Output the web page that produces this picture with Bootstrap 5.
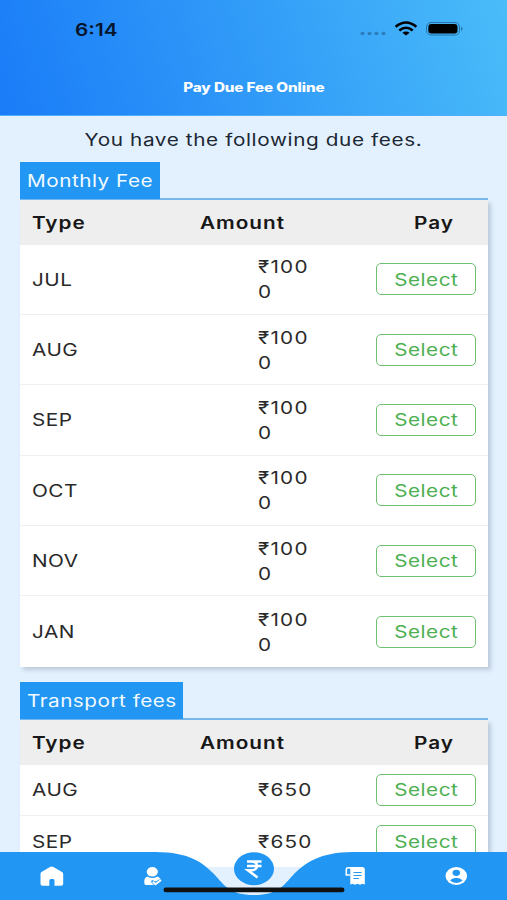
<!DOCTYPE html>
<html lang="en">
<head>
<meta charset="utf-8">
<meta name="viewport" content="width=device-width, initial-scale=1">
<title>Pay Due Fee Online</title>
<link href="https://cdn.jsdelivr.net/npm/bootstrap@5.3.0/dist/css/bootstrap.min.css" rel="stylesheet">
<style>
body{font-family:Inter,"Liberation Sans",sans-serif;font-size:17px;line-height:25px;color:#2a2a2a;background:#e3f1fe;height:900px;overflow:hidden}
.wide{display:inline-block;transform:translateY(1px) scaleX(1.22);transform-origin:left center;white-space:nowrap;letter-spacing:.4px}
.wide.mid{transform-origin:center}
.topbar{height:115.5px;background:linear-gradient(73deg,#1a7cf8 0%,#319bf8 50%,#4abcf9 100%);border-bottom:1px solid #52aefb}
.status{height:58px;padding:0 44px 0 75px}
.clock{font-size:17px;font-weight:600;color:#06152b;letter-spacing:0}
.bar-title{font-size:12.5px;font-weight:800;color:#fff;letter-spacing:-.1px}
.intro{height:46px;padding-top:2px;color:#1c2733}
.intro .wide{letter-spacing:.5px}
.fees{margin:0 19px 15px 20px}
.tab-line{height:38px;border-bottom:2px solid #76b8ee}
.tab-label{height:37px;width:140px;background:#2196f3;color:#f2faff;padding-left:7px}
.short .tab-label{width:163px}
.fee-table{background:#fff;box-shadow:3px 3px 4px rgba(80,100,125,.27)}
.fee-row{height:70.4px;border-bottom:1px solid #f0f0f0;padding:0 12px}
.fee-row:last-child{border-bottom:0}
.short .fee-row{height:51px}
.fee-head{height:45px;background:#eee;padding:0 12px;font-weight:600;color:#171717}
.fee-head .wide{letter-spacing:.8px}
.c-type{width:168px}
.c-amount{width:213.5px}
.r-type{width:226px}
.r-amount{width:118px}
.r-amount .wide{width:49px;white-space:normal;word-break:break-all;letter-spacing:1px}
.btn-select{width:100px;height:32px;margin-left:auto;border:1.5px solid #6cc070;border-radius:5px;color:#4caf50;font-size:17px;line-height:1}
.tabbar{height:48px}
</style>
</head>
<body>
<header class="topbar">
  <div class="status d-flex align-items-center justify-content-between">
    <span class="wide clock">6:14</span>
    <svg width="104" height="20" viewBox="0 0 104 20">
      <g fill="#2b7dbb"><ellipse cx="3.500" cy="14.500" rx="2" ry="1.700"/><ellipse cx="10.500" cy="14.500" rx="2" ry="1.700"/><ellipse cx="17.500" cy="14.500" rx="2" ry="1.700"/><ellipse cx="24.500" cy="14.500" rx="2" ry="1.700"/></g>
      <g fill="none" stroke="#000" stroke-width="2.600"><path d="M36.600 7.800Q47 -.8 57.400 7.800"/><path d="M40.300 11.500Q47 6 53.700 11.500"/></g>
      <path d="M43.400 13.800Q47 11 50.600 13.800L47 16.600Z"/>
      <rect x="67.500" y="3.500" width="33" height="12.500" rx="4.500" fill="none" stroke="#2773a5" stroke-width="1"/>
      <rect x="69.300" y="5" width="29.200" height="9.500" rx="3"/>
      <path d="M102 7.500Q105 9.700 102 12Z" fill="#2773a5"/>
    </svg>
  </div>
  <div class="d-flex justify-content-center align-items-center h-50"><span class="wide mid bar-title">Pay Due Fee Online</span></div>
</header>
<main>
  <div class="intro d-flex justify-content-center align-items-center"><span class="wide mid">You have the following due fees.</span></div>
  <section class="fees">
    <div class="tab-line d-flex"><div class="tab-label d-flex align-items-center"><span class="wide">Monthly Fee</span></div></div>
    <div class="fee-table">
      <div class="fee-head d-flex align-items-center"><div class="c-type"><span class="wide">Type</span></div><div class="c-amount"><span class="wide">Amount</span></div><span class="wide">Pay</span></div>
      <div class="fee-row d-flex align-items-center"><div class="r-type"><span class="wide">JUL</span></div><div class="r-amount"><span class="wide">₹1000</span></div><button class="btn btn-select p-0"><span class="wide mid">Select</span></button></div>
      <div class="fee-row d-flex align-items-center"><div class="r-type"><span class="wide">AUG</span></div><div class="r-amount"><span class="wide">₹1000</span></div><button class="btn btn-select p-0"><span class="wide mid">Select</span></button></div>
      <div class="fee-row d-flex align-items-center"><div class="r-type"><span class="wide">SEP</span></div><div class="r-amount"><span class="wide">₹1000</span></div><button class="btn btn-select p-0"><span class="wide mid">Select</span></button></div>
      <div class="fee-row d-flex align-items-center"><div class="r-type"><span class="wide">OCT</span></div><div class="r-amount"><span class="wide">₹1000</span></div><button class="btn btn-select p-0"><span class="wide mid">Select</span></button></div>
      <div class="fee-row d-flex align-items-center"><div class="r-type"><span class="wide">NOV</span></div><div class="r-amount"><span class="wide">₹1000</span></div><button class="btn btn-select p-0"><span class="wide mid">Select</span></button></div>
      <div class="fee-row d-flex align-items-center"><div class="r-type"><span class="wide">JAN</span></div><div class="r-amount"><span class="wide">₹1000</span></div><button class="btn btn-select p-0"><span class="wide mid">Select</span></button></div>
    </div>
  </section>
  <section class="fees short">
    <div class="tab-line d-flex"><div class="tab-label d-flex align-items-center"><span class="wide">Transport fees</span></div></div>
    <div class="fee-table">
      <div class="fee-head d-flex align-items-center"><div class="c-type"><span class="wide">Type</span></div><div class="c-amount"><span class="wide">Amount</span></div><span class="wide">Pay</span></div>
      <div class="fee-row d-flex align-items-center"><div class="r-type"><span class="wide">AUG</span></div><div class="r-amount"><span class="wide">₹650</span></div><button class="btn btn-select p-0"><span class="wide mid">Select</span></button></div>
      <div class="fee-row d-flex align-items-center"><div class="r-type"><span class="wide">SEP</span></div><div class="r-amount"><span class="wide">₹650</span></div><button class="btn btn-select p-0"><span class="wide mid">Select</span></button></div>
    </div>
  </section>
</main>
<nav class="tabbar fixed-bottom">
  <svg class="d-block" width="507" height="48" viewBox="0 852 507 48">
    <path fill="#e3f1fe" d="M180 867H330V900H180Z"/>
    <path fill="#2196f3" d="M0 852H155C190 852 203 863 214 874C225 886 230 895 254 895S283 886 294 874C305 863 320 852 353 852H507V900H0Z"/>
    <ellipse cx="254" cy="868.700" rx="20" ry="16.500" fill="#2196f3"/>
    <g fill="none" stroke="#fff" stroke-width="2.600"><path d="M247 861.500H261.500M247 866H261.500M247 861.500H251C259 861.500 259 870.300 251 870.300H248L257.500 877.500"/></g>
    <path fill="#fff" d="M40.500 874Q40.500 872.700 41.500 872L50 867Q51.700 866.200 53.400 867L62 872Q63.200 872.700 63.200 874V884Q63.200 885.700 61 885.700H54.500V880.500Q54.500 879 53 879H51Q49.300 879 49.300 880.500V885.700H42.500Q40.500 885.700 40.500 884Z"/>
    <ellipse cx="152.300" cy="871.800" rx="5.600" ry="4.800" fill="#fff"/>
    <path fill="#fff" d="M147.500 876.500Q152 879.500 157.500 876.500Q160 877.500 160.500 879L155.500 881.500L152 880L151 882L154 885H146Q144.300 885 144.300 883V880.500Q144.500 877.500 147.500 876.500Z"/>
    <path d="M152.800 881.800L155.500 884.200L161 880" fill="none" stroke="#fff" stroke-width="2"/>
    <path fill="#fff" d="M349 867H362Q364.800 867 364.800 869.500V884.500L362.500 883.800L360 884.700L357.500 883.800L355 884.700L352.500 883.800L350.300 884.500V869.500Z"/>
    <path d="M350.500 867.800H348Q346.300 867.800 346.300 870V875H350" fill="none" stroke="#fff" stroke-width="1.600"/>
    <path d="M353.500 872.500H361.500M353.500 875.500H361.500M353.500 878.500H359" stroke="#2196f3" stroke-width="1.100"/>
    <ellipse cx="456.300" cy="876" rx="10.800" ry="9" fill="#fff"/>
    <ellipse cx="456.300" cy="872.800" rx="3.800" ry="3.100" fill="#2196f3"/>
    <path fill="#2196f3" d="M450 880.300Q452.500 877.700 456.300 877.700T462.600 880.300Q460.500 882.900 456.300 882.900T450 880.300Z"/>
    <rect x="163.500" y="887.500" width="181" height="4.800" rx="2.400" fill="#111"/>
  </svg>
</nav>
<script src="https://cdn.jsdelivr.net/npm/bootstrap@5.3.0/dist/js/bootstrap.bundle.min.js"></script>
</body>
</html>
